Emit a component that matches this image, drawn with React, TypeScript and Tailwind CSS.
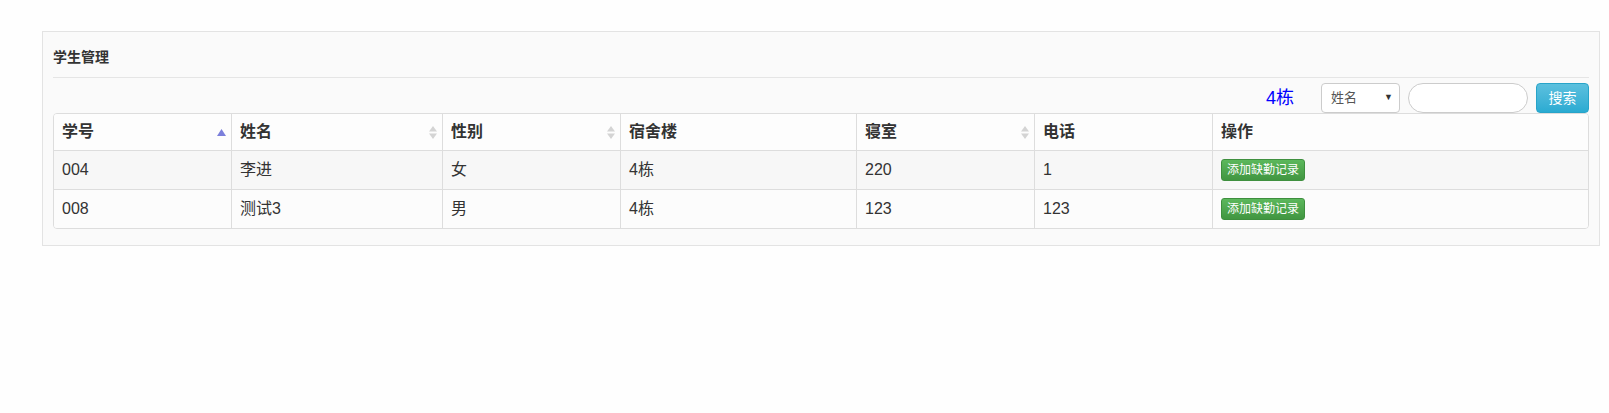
import React from "react";

type Col = { title: string; width: string; sort?: "asc" | "both" };

const COLS: Col[] = [
  { title: "学号", width: "w-[177px]", sort: "asc" },
  { title: "姓名", width: "w-[211px]", sort: "both" },
  { title: "性别", width: "w-[178px]", sort: "both" },
  { title: "宿舍楼", width: "w-[236px]" },
  { title: "寝室", width: "w-[178px]", sort: "both" },
  { title: "电话", width: "w-[178px]" },
  { title: "操作", width: "w-[376px]" },
];

const ROWS = [
  ["004", "李进", "女", "4栋", "220", "1"],
  ["008", "测试3", "男", "4栋", "123", "123"],
];

const SortIcon = ({ kind }: { kind: "asc" | "both" }) =>
  kind === "asc" ? (
    <svg width="9" height="7" viewBox="0 0 9 7" className="mr-[1px]">
      <polygon points="4.5,0 9,7 0,7" fill="#7b7fdb" />
    </svg>
  ) : (
    <svg width="8" height="13" viewBox="0 0 8 13" className="mr-[1px]">
      <polygon points="4,0 8,5.5 0,5.5" fill="#d4d4d4" />
      <polygon points="0,7.5 8,7.5 4,13" fill="#d4d4d4" />
    </svg>
  );

const App = () => {
  return (
    <div className="min-h-[413px] bg-[#fefefe] pl-[42px] pr-[9px] pt-[31px] font-['Liberation_Sans','Noto_Sans_CJK_SC',sans-serif] text-[#333]">
      <div className="border border-[#e3e3e3] bg-[#fafafa] px-[10px] pb-[16px]">
        {/* title */}
        <div className="border-b border-[#e5e5e5] pb-[10px] pt-[15px] text-[14px] font-bold leading-[20px]">
          学生管理
        </div>

        {/* toolbar */}
        <div className="mt-[5px] flex h-[30px] items-center justify-end">
          <span className="mr-[27px] text-[18px] leading-[30px] text-[#0000ff]">4栋</span>
          <div className="mr-[8px] flex h-[30px] w-[79px] items-center justify-between rounded-[4px] border border-[#cccccc] bg-white pl-[9px] pr-[6px] text-[13px] text-[#555]">
            <span>姓名</span>
            <span className="text-[9px] text-[#333]">▼</span>
          </div>
          <div className="mr-[8px] h-[30px] w-[120px] rounded-full border border-[#cccccc] bg-white" />
          <button className="h-[30px] w-[53px] rounded-[4px] border border-[#28a4c9] bg-linear-to-b from-[#5bc0de] to-[#2aabd2] text-[14px] text-white">
            搜索
          </button>
        </div>

        {/* table */}
        <div className="overflow-hidden rounded-[4px] border border-[#dddddd]">
          <table className="w-full table-fixed border-separate border-spacing-0 text-[16px]">
            <thead>
              <tr className="bg-[#fdfdfd]">
                {COLS.map((c, i) => (
                  <th
                    key={c.title}
                    className={`${c.width} h-[36px] p-0 text-left align-middle font-bold ${i > 0 ? "border-l border-[#dddddd]" : ""}`}
                  >
                    <div className="flex items-center justify-between pl-[8px] pr-[4px]">
                      <span>{c.title}</span>
                      {c.sort && <SortIcon kind={c.sort} />}
                    </div>
                  </th>
                ))}
              </tr>
            </thead>
            <tbody>
              {ROWS.map((r, ri) => (
                <tr key={ri} className={ri % 2 === 0 ? "bg-[#f7f7f7]" : "bg-[#fcfcfc]"}>
                  {r.map((v, i) => (
                    <td
                      key={i}
                      className={`h-[39px] border-t border-[#dddddd] px-[8px] align-middle ${i > 0 ? "border-l" : ""}`}
                    >
                      {v}
                    </td>
                  ))}
                  <td className="h-[39px] border-l border-t border-[#dddddd] px-[8px] align-middle">
                    <button className="flex h-[22px] items-center rounded-[3px] border border-[#3e8f3e] bg-linear-to-b from-[#5cb85c] to-[#419641] px-[5px] text-[12px] text-white">
                      添加缺勤记录
                    </button>
                  </td>
                </tr>
              ))}
            </tbody>
          </table>
        </div>
      </div>
    </div>
  );
};

export default App;
